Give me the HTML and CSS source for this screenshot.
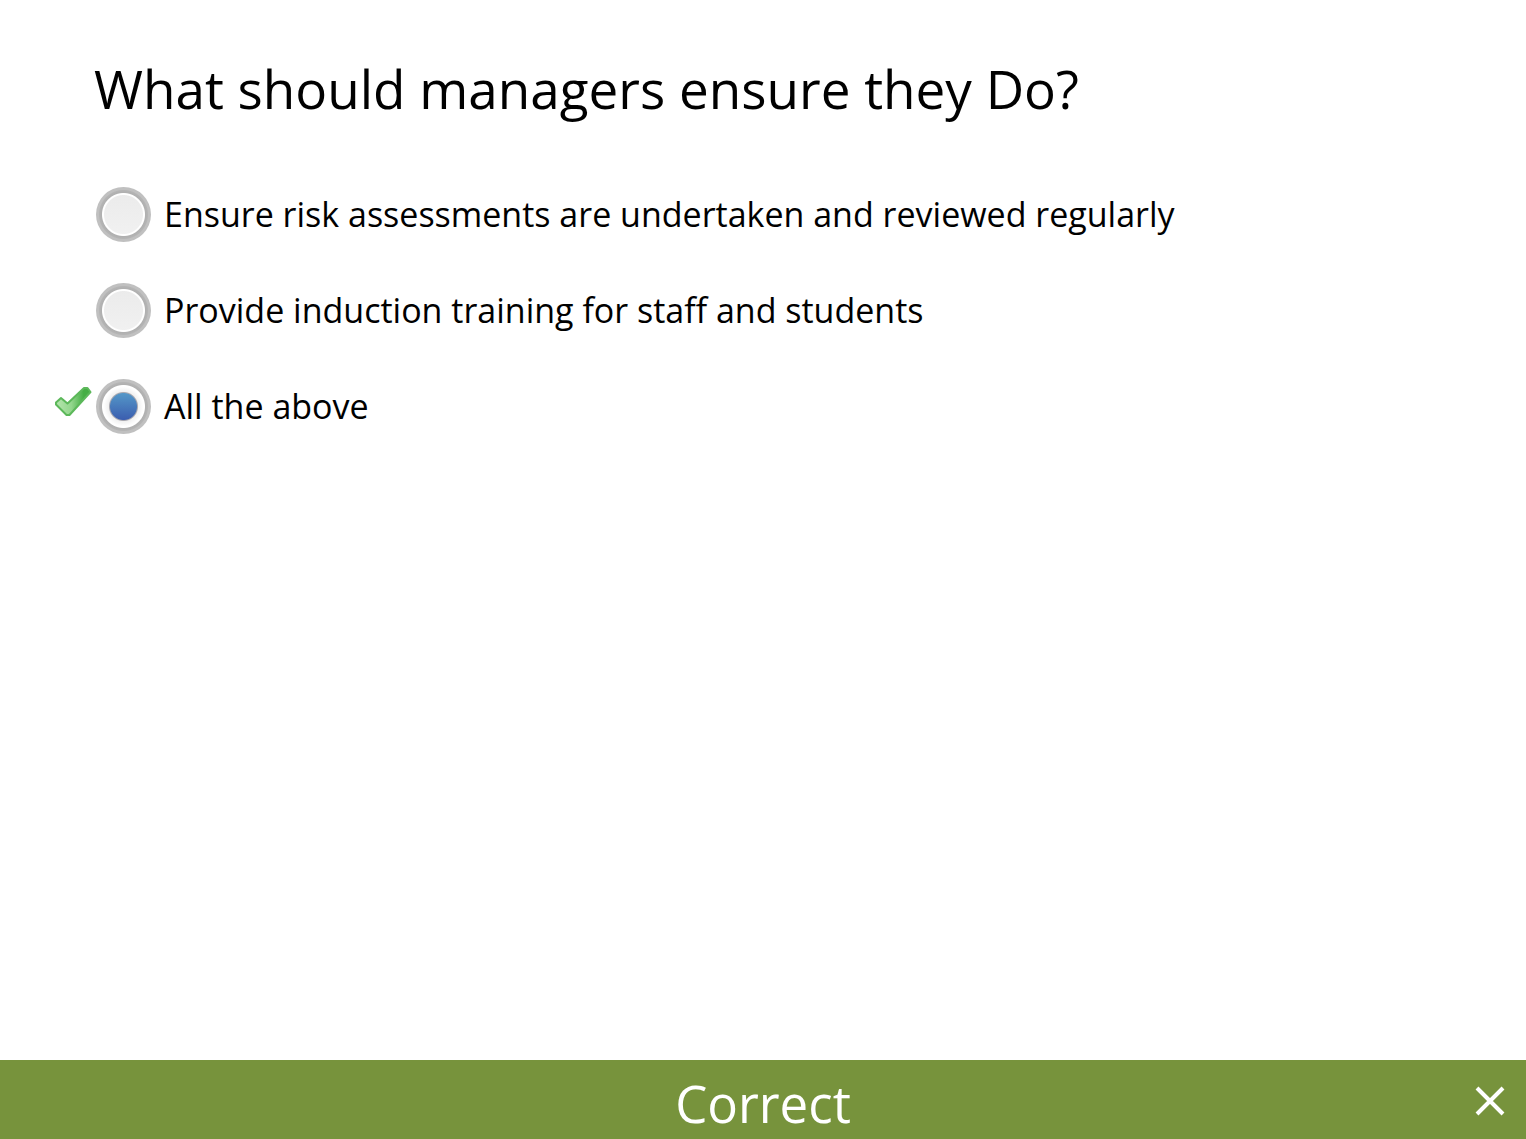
FILE: index.html
```
<!DOCTYPE html>
<html lang="en">
<head>
<meta charset="utf-8">
<meta name="viewport" content="width=device-width, initial-scale=1">
<title>Quiz question</title>
<link rel="stylesheet" href="styles.css">
</head>
<body>
<form class="quiz">
  <main class="question">
    <h1 class="title" id="question-title">What should managers ensure they Do?</h1>
    <div class="choices" role="radiogroup" aria-labelledby="question-title">
      <div class="choice">
        <span class="mark"></span>
        <input class="radio" type="radio" name="answer" id="answer-1">
        <label class="label" for="answer-1">Ensure risk assessments are undertaken and reviewed regularly</label>
      </div>
      <div class="choice">
        <span class="mark"></span>
        <input class="radio" type="radio" name="answer" id="answer-2">
        <label class="label" for="answer-2">Provide induction training for staff and students</label>
      </div>
      <div class="choice">
        <span class="mark">
          <svg class="tick" viewBox="0 0 38 32" aria-hidden="true">
            <defs>
              <linearGradient id="tick-fill" x1="0" y1="0" x2="1" y2="0">
                <stop offset="0.1" stop-color="#aee2a6"/>
                <stop offset="0.45" stop-color="#92d68c"/>
                <stop offset="0.8" stop-color="#45ae45"/>
              </linearGradient>
            </defs>
            <path d="M2 16.5 L7 12 L13.5 17.5 L30 2 L33.5 2 L36.5 6 L15.5 29 L12.5 29 L2 18.5 Z" fill="url(#tick-fill)" stroke="#5cb85a" stroke-width="2" stroke-linejoin="round"/>
          </svg>
        </span>
        <input class="radio" type="radio" name="answer" id="answer-3" checked>
        <label class="label" for="answer-3">All the above</label>
      </div>
    </div>
  </main>
  <footer class="feedback">
    <p class="result">Correct</p>
    <button class="close" type="button" aria-label="Close">
      <svg class="close-icon" viewBox="0 0 30 30" aria-hidden="true">
        <path d="M2 2 L28 28 M28 2 L2 28" stroke="#fff" stroke-width="4" fill="none"/>
      </svg>
    </button>
  </footer>
</form>
</body>
</html>
```
FILE: styles.css
```
* {
  box-sizing: border-box;
}

body {
  margin: 0;
  background: #fff;
  color: #000;
  font-family: "Open Sans", sans-serif;
}

.quiz {
  display: flex;
  flex-direction: column;
  min-height: 100vh;
}

.question {
  flex: 1;
  padding: 53px 54px 40px;
}

.title {
  margin: 0 0 62px;
  padding-left: 40px;
  font-size: 53px;
  font-weight: 400;
  line-height: 72px;
}

.choices {
  display: flex;
  flex-direction: column;
  gap: 41px;
}

.choice {
  display: flex;
  align-items: center;
}

.mark {
  display: flex;
  flex: none;
  width: 42px;
  height: 41px;
}

.tick {
  width: 38px;
  height: 32px;
}

.radio {
  appearance: none;
  flex: none;
  width: 55px;
  height: 55px;
  margin: 0;
  border-radius: 50%;
  background:
    radial-gradient(circle, transparent 19px, #fff 20px, #fff 21px, #b0b0b0 22px, #b4b4b4 24px, #c0c0c0 25px, #c0c0c0 100%),
    linear-gradient(#ebebeb, #f1f1f1) center / 43px 43px no-repeat;
}

.radio:checked {
  background:
    radial-gradient(circle, transparent 13px, #a8a8b0 14px, #f1f1f1 15px, #fff 20px, #fff 21px, #b0b0b0 22px, #b4b4b4 24px, #c0c0c0 25px, #c0c0c0 100%),
    linear-gradient(#559ac9, #3a5bae) center / 29px 29px no-repeat;
}

.label {
  padding-left: 13px;
  font-size: 34px;
  line-height: 47px;
}

.feedback {
  display: grid;
  grid-template-columns: 72px 1fr 72px;
  align-items: end;
  min-height: 79px;
  background: #77933c;
  color: #fff;
}

.result {
  grid-column: 2;
  margin: 0;
  font-size: 51px;
  line-height: 72px;
  text-align: center;
}

.close {
  display: flex;
  align-items: center;
  justify-content: center;
  height: 76px;
  padding: 0;
  border: 0;
  background: none;
}

.close-icon {
  width: 30px;
  height: 30px;
}
```
